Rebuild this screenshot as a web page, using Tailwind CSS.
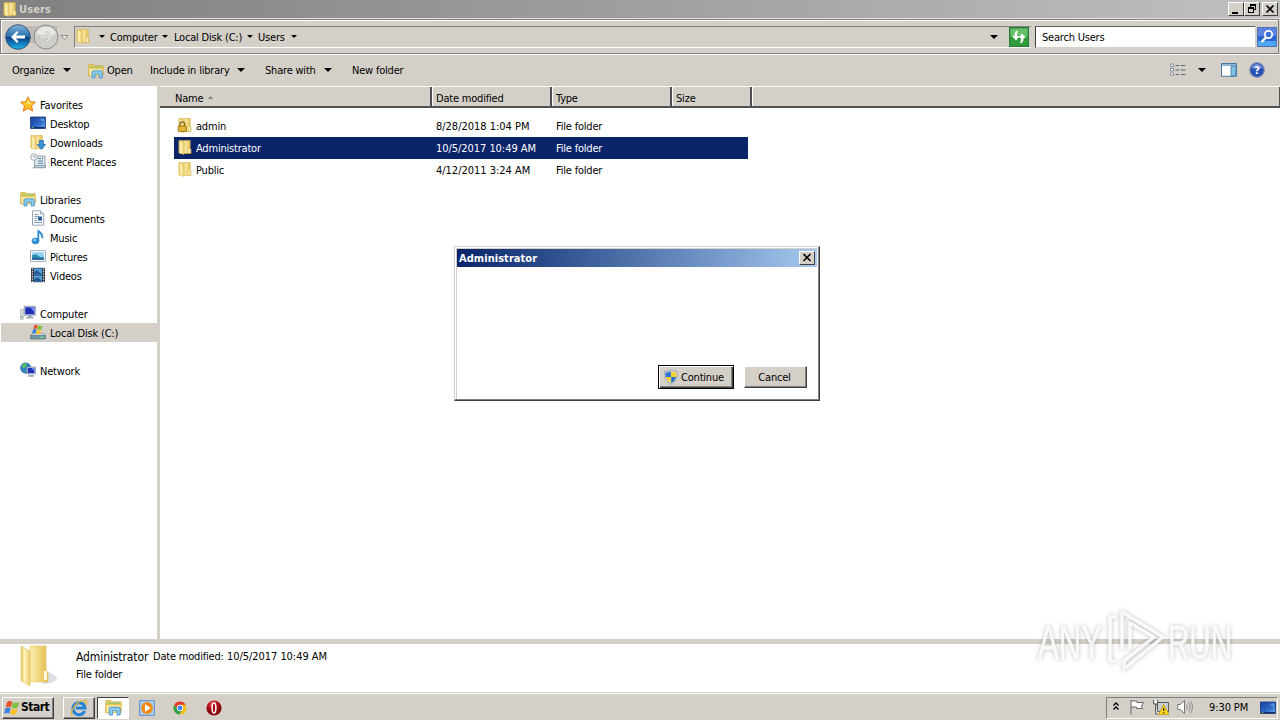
<!DOCTYPE html>
<html lang="en">
<head>
  <meta charset="UTF-8">
  <meta name="viewport" content="width=device-width, initial-scale=1.0">
  <title>Users</title>
  <script src="https://cdn.jsdelivr.net/npm/@tailwindcss/browser@4"></script>
  <style>
    body {
      font-family: 'DejaVu Sans Condensed', 'DejaVu Sans', sans-serif;
      font-stretch: condensed;
    }
  </style>
</head>
<body class="w-[1280px] h-[720px] overflow-hidden bg-[#d4d0c8] text-[11px] leading-[19px] tracking-[-0.2px] text-black whitespace-nowrap">

<!-- Icons -->
<svg class="absolute w-0 h-0">
  <defs>
    <linearGradient id="gFolder" x1="0" x2="1"><stop offset="0" stop-color="#fbeeb0"/><stop offset="1" stop-color="#e3bd4c"/></linearGradient>
    <linearGradient id="gFront" x1="0" x2="1"><stop offset="0" stop-color="#e6c55c"/><stop offset=".4" stop-color="#fdf3bd"/><stop offset="1" stop-color="#e9ca6a"/></linearGradient>
    <linearGradient id="gBlue" x1="0" y1="0" x2="0" y2="1"><stop offset="0" stop-color="#7fb4dc"/><stop offset=".48" stop-color="#2a6cae"/><stop offset=".52" stop-color="#0a3f85"/><stop offset="1" stop-color="#1fb6ee"/></linearGradient>
    <linearGradient id="gScreen" x1="0" y1="0" x2="1" y2="1"><stop offset="0" stop-color="#1a3c9c"/><stop offset=".6" stop-color="#2f6cc8"/><stop offset="1" stop-color="#6fb4ec"/></linearGradient>
    <linearGradient id="gStar" x1="0" y1="0" x2="0" y2="1"><stop offset="0" stop-color="#ffd83c"/><stop offset="1" stop-color="#ffb21c"/></linearGradient>
    <radialGradient id="gRed" cx=".4" cy=".25"><stop offset="0" stop-color="#ef6a6a"/><stop offset=".5" stop-color="#c41420"/><stop offset="1" stop-color="#8a0710"/></radialGradient>
  </defs>
  <symbol id="folder" viewBox="0 0 16 16">
    <path d="M2 1.500h4l1 .5v12H2z" fill="#f3dc84" stroke="#d8b54c" stroke-width=".6"/>
    <path d="M7 1.500h6.200v8l.8 1v4H7z" fill="url(#gFolder)" stroke="#d3ae44" stroke-width=".6"/>
    <path d="M2 2l5 1.600v11.900L2 14z" fill="url(#gFront)" stroke="#d8b54c" stroke-width=".4"/>
    <path d="M11.800 10h1.400v4h-1.400z" fill="#fff8d8"/>
  </symbol>
  <symbol id="lock" viewBox="0 0 16 16">
    <path d="M3 9V7.300a2.400 2.400 0 0 1 4.800 0V9" fill="none" stroke="#8c7426" stroke-width="1.500"/>
    <rect x="1.300" y="9" width="8" height="5.600" rx=".6" fill="#d9a520" stroke="#94700c" stroke-width=".8"/>
    <path d="M2 11h6.600M2 13h6.600" stroke="#f5d768" stroke-width=".7"/>
  </symbol>
  <symbol id="library" viewBox="0 0 16 16">
    <path d="M.7 13V2.200q0-.7.7-.7h4l1 1.300h8.800V12z" fill="#f0d265" stroke="#c9a136" stroke-width=".7"/>
    <path d="M2 4h12" stroke="#8fc46c" stroke-width="1.200"/>
    <path d="M.7 5.600h14.600l-.6 7.200H1.200z" fill="#fbeca4" stroke="#d8b54c" stroke-width=".6"/>
    <path d="M4 15V9.300q0-1.500 1.500-1.500h7.300q1.500 0 1.500 1.500V15h-3v-3.900H7V15z" fill="#8ccbf0" stroke="#3d8dc4" stroke-width=".8"/>
  </symbol>
  <symbol id="star" viewBox="0 0 16 16">
    <path d="M8 .8l2.200 4.900 5.200.5-3.900 3.600 1.200 5.300L8 12.400l-4.700 2.700 1.200-5.300L.6 6.200l5.200-.5z" fill="url(#gStar)" stroke="#e5811c" stroke-width="1"/>
    <path d="M8 3.500l1.400 3.300 3 .4-4.400.7z" fill="#fff3a8"/>
  </symbol>
  <symbol id="screen" viewBox="0 0 16 16">
    <path d="M.5 2h15v11.500H.5z" fill="url(#gScreen)" stroke="#16337c" stroke-width=".8"/>
    <path d="M1 12h14v1.400H1z" fill="#17316e"/>
    <path d="M1.800 12.200h1.600v1H1.800z" fill="#7fd36a"/>
    <path d="M10 4l4-.5v4z" fill="#8fc2f0" opacity=".5"/>
  </symbol>
  <symbol id="downloads" viewBox="0 0 16 16">
    <use href="#folder" x="-1" width="16" height="16"/>
    <path d="M9.400 6.500h4v4h2.200L11.400 15.400 7.200 10.500h2.200z" fill="#3a94dc" stroke="#1a62a8" stroke-width=".7"/>
  </symbol>
  <symbol id="recent" viewBox="0 0 16 16">
    <path d="M5 3h10v11.500H4.500v-8z" fill="#dfe7ec" stroke="#7d8e99" stroke-width=".8"/>
    <path d="M3 14.800h12.500v-2.300H5z" fill="#c3ced6" stroke="#7d8e99" stroke-width=".7"/>
    <path d="M8 5.500h3M8 8h5M8 10.300h5M12.500 4.500v2" stroke="#5b87a8" stroke-width="1"/>
    <circle cx="4" cy="4" r="3.300" fill="#f7f9fa" stroke="#8c9aa3" stroke-width=".8"/>
    <path d="M4 2v2h1.600" fill="none" stroke="#5a6d78" stroke-width=".7"/>
  </symbol>
  <symbol id="document" viewBox="0 0 16 16">
    <path d="M2.500.8h8l3.300 3.200v11.200H2.500z" fill="#fdfdfe" stroke="#7c90aa" stroke-width=".8"/>
    <path d="M10.500.8V4h3.300" fill="#d5e0ea" stroke="#7c90aa" stroke-width=".7"/>
    <path d="M4.500 4.500h4M4.500 6.500h4M4.500 8.500h2.500M4.500 10.500h2.500M4.500 12.500h7.500" stroke="#5c7fa8" stroke-width=".8"/>
    <path d="M8 6.500h4v4H8z" fill="#2d5f9c"/>
  </symbol>
  <symbol id="music" viewBox="0 0 16 16">
    <path d="M8.300 12V1.200c.5 2.500 5 3 3.900 8" fill="none" stroke="#2f8ed2" stroke-width="1.800"/>
    <ellipse cx="5.500" cy="12" rx="3.600" ry="2.900" fill="#2b93dc" stroke="#1b6caf" stroke-width=".5"/>
    <ellipse cx="4.700" cy="11" rx="1.500" ry=".9" fill="#a5d8f7"/>
  </symbol>
  <symbol id="picture" viewBox="0 0 16 16">
    <path d="M.6 2.600h14.800v11H.6z" fill="#fff" stroke="#7f93a3" stroke-width=".8"/>
    <path d="M2.200 4.200h11.600v7.800H2.200z" fill="#8fd0f2"/>
    <path d="M2.200 7q4-1.500 6 .8t5.600.8V12H2.200z" fill="#2b8fa0"/>
    <path d="M2.200 9.500q6-.3 11.600 1V12H2.200z" fill="#2a65a4"/>
  </symbol>
  <symbol id="video" viewBox="0 0 16 16">
    <path d="M1 .8h14v14.400H1z" fill="#333c46"/>
    <path d="M4 1.500h8v6H4zM4 8.500h8v6H4z" fill="#4fa3dc"/>
    <path d="M4 5l3-2 5 4.500H4zM4 12l4-2 4 4.500H4z" fill="#275c98"/>
    <path d="M2.500 1.500v14M13.500 1.500v14" stroke="#dfe6ea" stroke-width="1.200" stroke-dasharray="1.300 1.200"/>
  </symbol>
  <symbol id="computer" viewBox="0 0 16 16">
    <path d="M.6 4.500h2.600v9.800H.6z" fill="#e2e6e8" stroke="#8b979e" stroke-width=".6"/>
    <path d="M1 11h1.600v1.500H1z" fill="#62b84c"/>
    <path d="M4.200 1.300h11.200v9H4.200z" fill="#d8dee6" stroke="#7885a0" stroke-width=".7"/>
    <path d="M5.200 2.300h9.200v7H5.200z" fill="#1d2fb4"/>
    <path d="M10 2.300h4.400v5z" fill="#6f8ef0"/>
    <path d="M8 10.300h3.600v1.700H8zM6 12h7.600v1.500H6z" fill="#9aa6b4"/>
  </symbol>
  <symbol id="winflag" viewBox="0 0 16 16">
    <path d="M3.100 2q2.700-1.700 5.200-.2L6.900 7.300q-2.500-1.400-5.200.2z" fill="#e8522a"/>
    <path d="M9 2.200q2.700 1.400 6.200-.2l-1.400 5.600q-3.300 1.500-6.200 0z" fill="#7cc03c"/>
    <path d="M1.500 8.300q2.600-1.600 5.200-.2l-1.400 5.500q-2.500-1.400-5.300.2z" fill="#3d82dc"/>
    <path d="M7.400 8.500q2.900 1.500 6.200.1L12.200 14q-3.300 1.500-6.200-.1z" fill="#fbc02c"/>
  </symbol>
  <symbol id="disk" viewBox="0 0 16 16">
    <path d="M2 9.500h12l1.500 2.500H.5z" fill="#cfd8dc" stroke="#71828a" stroke-width=".5"/>
    <path d="M.5 11.500h15v3.500H.5z" fill="#6f97a6" stroke="#4c6b78" stroke-width=".6"/>
    <path d="M10 13.200h4" stroke="#8be58a" stroke-width="1"/>
    <use href="#winflag" x="2" y="0" width="11" height="11"/>
  </symbol>
  <symbol id="network" viewBox="0 0 16 16">
    <circle cx="5.700" cy="6" r="5.200" fill="#2d83c6" stroke="#1c5c94" stroke-width=".5"/>
    <path d="M2 3q3-2.500 5-1.500L6 5 3 6.500zM5 8l4-1-1 4z" fill="#5cc05c"/>
    <path d="M6.800 5h8.600v7H6.800z" fill="#d8dee6" stroke="#66759a" stroke-width=".6"/>
    <path d="M7.700 5.900h6.800v5.200H7.700z" fill="#1d2fb4"/>
    <path d="M11.500 5.900h3v3.500z" fill="#6f8ef0"/>
    <path d="M8.500 13.200h5.300v1.500H8.500z" fill="#8793a4"/>
  </symbol>
  <symbol id="down" viewBox="0 0 8 4"><path d="M0 0h8L4 4z"/></symbol>
  <symbol id="shield" viewBox="0 0 16 16">
    <path d="M8 .7q3 2 6.300 1.900Q15 11.300 8 15.400 1 11.300 1.700 2.600 5 2.700 8 .7z" fill="#e8edf2" stroke="#8090a0" stroke-width=".8"/>
    <path d="M7.900 2v6H2.800q-.5-2-.3-4.300Q5.600 3.600 7.900 2z" fill="#2a70cc"/>
    <path d="M8.100 2v6h5.100q.5-2 .3-4.300Q10.400 3.600 8.100 2z" fill="#f6d02c"/>
    <path d="M7.900 8v6.200Q4 12 2.800 8z" fill="#f6d02c"/>
    <path d="M8.100 8v6.200Q12 12 13.200 8z" fill="#2a70cc"/>
  </symbol>
</svg>

<div class="relative flex flex-col h-full">

  <!-- Title bar -->
  <header class="flex items-center h-[18px] pl-[2px] pr-[2px] bg-linear-to-r from-[#808080] to-[#c0c0c0]">
    <svg class="w-4 h-4"><use href="#folder"/></svg>
    <span class="ml-[1px] font-bold tracking-[0.1px] text-[#d4d0c8]">Users</span>
    <div class="flex ml-auto">
      <div class="w-4 h-[14px] bg-[#d4d0c8] border border-t-white border-l-white border-r-[#404040] border-b-[#404040]"><svg class="w-[14px] h-3" shape-rendering="crispEdges"><path d="M3 9h6v2H3z"/></svg></div>
      <div class="w-4 h-[14px] bg-[#d4d0c8] border border-t-white border-l-white border-r-[#404040] border-b-[#404040]"><svg class="w-[14px] h-3" shape-rendering="crispEdges"><path d="M5 1h6v6H9V6h1V3H6v1H5zM3 4h6v6H3zM4 6v3h4V6z" fill-rule="evenodd"/></svg></div>
      <div class="w-4 h-[14px] ml-[2px] bg-[#d4d0c8] border border-t-white border-l-white border-r-[#404040] border-b-[#404040]"><svg class="w-[14px] h-3"><path d="M3.500 2.500l7 7M10.500 2.500l-7 7" stroke="#000" stroke-width="1.600"/></svg></div>
    </div>
  </header>

  <!-- Address bar -->
  <div class="h-[37px] pr-px border-t border-b border-t-[#e4e1dc] border-b-white">
    <div class="flex items-center w-full h-[35px] pl-1 border border-[#808080] shadow-[inset_1px_1px_0_#fff]">
      <svg class="w-[68px] h-[30px] shrink-0" viewBox="0 0 68 30">
        <rect x="10" y="4" width="42" height="17" fill="#bdbbb7"/>
        <circle cx="13" cy="15" r="12.300" fill="url(#gBlue)" stroke="#355578" stroke-width="1"/>
        <path d="M6 15l6-6 1.500 1.600-2.600 2.800H20v3.200h-9.100l2.600 2.800L12 21z" fill="#fff"/>
        <circle cx="41" cy="15" r="12" fill="#cfcdca" stroke="#8c8c8c" stroke-width="1"/>
        <path d="M31 12a10.500 10.500 0 0 1 20 0q-10 4-20 0z" fill="#e8e7e5"/>
        <path d="M48 15l-6-6-1.500 1.600 2.600 2.800H34v3.200h9.100l-2.600 2.800L42 21z" fill="#dddbd8" stroke="#bbb" stroke-width=".6"/>
        <path d="M56 13.500h7l-3.500 4z" fill="#eee" stroke="#8a8a8a"/>
      </svg>
      <div class="flex items-center w-[957px] h-[22px] shrink-0 ml-px border-t border-l border-t-[#808080] border-l-[#808080] border-b border-b-white">
        <svg class="w-4 h-4 -mt-px"><use href="#folder"/></svg>
        <svg class="w-[6px] h-[3px] ml-[8px]"><use href="#down"/></svg>
        <span class="ml-[5px] w-[50px] pt-px">Computer</span>
        <svg class="w-[6px] h-[3px] ml-[2px]"><use href="#down"/></svg>
        <span class="ml-[6px] w-[69px] pt-px">Local Disk (C:)</span>
        <svg class="w-[6px] h-[3px] ml-[4px]"><use href="#down"/></svg>
        <span class="ml-[5px] w-[29px] pt-px">Users</span>
        <svg class="w-[6px] h-[3px] ml-[4px]"><use href="#down"/></svg>
        <svg class="w-2 h-1 ml-auto mr-[11px]"><use href="#down"/></svg>
        <svg class="w-5 h-5 mr-[2px]" viewBox="0 0 20 20">
          <rect x=".5" y=".5" width="19" height="19" fill="#2f9c3c" stroke="#2c7a38"/>
          <rect x="1.500" y="1.500" width="17" height="8" fill="#67bf6c"/>
          <path d="M9 3.500Q5 4 5.500 9H3l4 4.500L10.500 9H8q0-3 1-5.500zM11 16.500q4-.5 3.500-5.500H17l-4-4.500L9.500 11H12q0 3-1 5.500z" fill="#fff"/>
        </svg>
      </div>
      <div class="flex items-center w-[221px] h-[22px] shrink-0 ml-[4px] pl-[6px] pt-px bg-white border border-t-[#606060] border-l-[#404040] border-r-[#d4d0c8] border-b-[#d4d0c8]">Search Users</div>
      <svg class="w-5 h-5 ml-px shrink-0" viewBox="0 0 20 20">
        <rect x=".5" y=".5" width="19" height="19" fill="#2a63d2" stroke="#5272b8"/>
        <rect x="1" y="1" width="18" height="8" fill="#5c82e2"/>
        <rect x="1" y="14" width="18" height="5" fill="#4ea6f0"/>
        <circle cx="11.500" cy="7.500" r="3.700" fill="#3c6fd8" stroke="#fff" stroke-width="1.800"/>
        <path d="M9 10.500L4.500 15" stroke="#fff" stroke-width="2.400"/>
      </svg>
    </div>
  </div>

  <!-- Command bar -->
  <div class="flex items-center h-[31px] pl-3 pr-[15px]">
    <span class="w-[44px]">Organize</span>
    <svg class="w-2 h-1 ml-[7px] -mt-px"><use href="#down"/></svg>
    <svg class="w-4 h-4 ml-[17px]"><use href="#library"/></svg>
    <span class="ml-[3px] w-[27px]">Open</span>
    <span class="ml-[16px] w-[80px]">Include in library</span>
    <svg class="w-2 h-1 ml-[7px] -mt-px"><use href="#down"/></svg>
    <span class="ml-[20px] w-[52px]">Share with</span>
    <svg class="w-2 h-1 ml-[7px] -mt-px"><use href="#down"/></svg>
    <span class="ml-[20px]">New folder</span>
    <svg class="w-4 h-4 ml-auto -mt-[2px]" viewBox="0 0 16 16"><path d="M.5 2h3v2.500h-3zM.5 6.500h3V9h-3zM.5 11h3v2.500h-3z" fill="#fff" stroke="#7d8894" stroke-width=".9"/><path d="M5.500 3.500h4M11 3.500h4.500M5.500 8h4M11 8h4.500M5.500 12.500h4M11 12.500h4.500" stroke="#5c6874"/></svg>
    <svg class="w-2 h-1 ml-[12px] -mt-[2px]"><use href="#down"/></svg>
    <svg class="w-4 h-4 ml-[15px] -mt-[2px]" viewBox="0 0 16 16"><path d="M.5 1.500h15v12.800H.5z" fill="#fff" stroke="#47789c"/><path d="M1 2h14v2H1z" fill="#8fb9d8"/><path d="M10 4h5v10h-5z" fill="#7cc0e4" stroke="#47789c" stroke-width=".8"/></svg>
    <svg class="w-4 h-4 ml-[12px] -mt-[2px]" viewBox="0 0 16 16"><circle cx="8" cy="8" r="7.300" fill="#2a50b4" stroke="#8593b4" stroke-width="1.200"/><path d="M2.500 6a5.800 5.800 0 0 1 11 0q-5 2-11 0z" fill="#6f8edc"/><text x="8" y="12.200" text-anchor="middle" font-size="11" font-weight="bold" fill="#fff">?</text></svg>
  </div>

  <!-- Main area -->
  <main class="flex h-[553px] bg-white">

    <nav class="w-[157px] pt-[9px]">
      <div class="flex items-center h-[19px] pl-5 pt-[2px]"><svg class="w-4 h-4 mr-1 mb-[4px]"><use href="#star"/></svg>Favorites</div>
      <div class="flex items-center h-[19px] pl-[30px] pt-[2px]"><svg class="w-4 h-4 mr-1 mb-[3px]"><use href="#screen"/></svg>Desktop</div>
      <div class="flex items-center h-[19px] pl-[30px] pt-[2px]"><svg class="w-4 h-4 mr-1 mb-[3px]"><use href="#downloads"/></svg>Downloads</div>
      <div class="flex items-center h-[19px] pl-[30px] pt-[2px]"><svg class="w-4 h-4 mr-1 mb-[3px]"><use href="#recent"/></svg>Recent Places</div>

      <div class="flex items-center h-[19px] pl-5 pt-[2px] mt-[19px]"><svg class="w-4 h-4 mr-1 mb-[3px]"><use href="#library"/></svg>Libraries</div>
      <div class="flex items-center h-[19px] pl-[30px] pt-[2px]"><svg class="w-4 h-4 mr-1 mb-[3px]"><use href="#document"/></svg>Documents</div>
      <div class="flex items-center h-[19px] pl-[30px] pt-[2px]"><svg class="w-4 h-4 mr-1 mb-[3px]"><use href="#music"/></svg>Music</div>
      <div class="flex items-center h-[19px] pl-[30px] pt-[2px]"><svg class="w-4 h-4 mr-1 mb-[3px]"><use href="#picture"/></svg>Pictures</div>
      <div class="flex items-center h-[19px] pl-[30px] pt-[2px]"><svg class="w-4 h-4 mr-1 mb-[3px]"><use href="#video"/></svg>Videos</div>

      <div class="flex items-center h-[19px] pl-5 pt-[2px] mt-[19px]"><svg class="w-4 h-4 mr-1 mb-[3px]"><use href="#computer"/></svg>Computer</div>
      <div class="flex items-center h-[19px] pl-[29px] pt-[2px] ml-px bg-[#d4d0c8]"><svg class="w-4 h-4 mr-1 mb-[3px]"><use href="#disk"/></svg>Local Disk (C:)</div>

      <div class="flex items-center h-[19px] pl-5 pt-[2px] mt-[19px]"><svg class="w-4 h-4 mr-1 mb-[3px]"><use href="#network"/></svg>Network</div>
    </nav>
    <div class="w-[3px] bg-[#d4d0c8]"></div>

    <section class="flex-1">
      <!-- Column headers -->
      <div class="flex h-[22px] bg-[#d4d0c8] border-t border-t-white border-b-2 border-b-[#505050] leading-[23px]">
        <div class="flex w-[272px] pl-[15px] border-r-2 border-r-[#505050]">Name<svg class="w-[5px] h-[3px] ml-[5px] mt-[9px]" viewBox="0 0 5 3"><path d="M0 3h5L2.500 0z" fill="#808080"/></svg></div>
        <div class="w-[120px] h-[19px] pl-[3px] border-l border-l-white border-r-2 border-r-[#505050]">Date modified</div>
        <div class="w-[120px] h-[19px] pl-[3px] border-l border-l-white border-r-2 border-r-[#505050]">Type</div>
        <div class="w-[80px] h-[19px] pl-[3px] border-l border-l-white border-r-2 border-r-[#505050]">Size</div>
        <div class="flex-1 border-l border-l-white border-r border-r-[#505050]"></div>
      </div>

      <!-- Files -->
      <div class="w-[574px] ml-[14px] mt-[7px] leading-[20px]">
        <div class="flex items-center h-[22px] pl-[3px] pt-[2px]">
          <svg class="w-4 h-4 mb-[4px]"><use href="#folder"/><use href="#lock"/></svg>
          <span class="w-[240px] ml-[3px]">admin</span>
          <span class="w-[120px] tracking-[-0.02px]">8/28/2018 1:04 PM</span>
          <span>File folder</span>
        </div>
        <div class="flex items-center h-[22px] pl-[3px] pt-[2px] bg-[#0a246a] text-white">
          <svg class="w-4 h-4 mb-[4px]"><use href="#folder"/></svg>
          <span class="w-[240px] ml-[3px]">Administrator</span>
          <span class="w-[120px] tracking-[-0.05px]">10/5/2017 10:49 AM</span>
          <span>File folder</span>
        </div>
        <div class="flex items-center h-[22px] pl-[3px] pt-[2px]">
          <svg class="w-4 h-4 mb-[4px]"><use href="#folder"/></svg>
          <span class="w-[240px] ml-[3px]">Public</span>
          <span class="w-[120px] tracking-[-0.02px]">4/12/2011 3:24 AM</span>
          <span>File folder</span>
        </div>
      </div>
    </section>
  </main>

  <!-- Details pane -->
  <div class="flex h-[53px] bg-white border-t-5 border-t-[#d4d0c8]">
    <svg class="w-[40px] h-[44px] ml-[18px]" viewBox="0 0 40 44">
      <path d="M24 40q14 0 15-7l-9-6z" fill="#9aa4ac" opacity=".35"/>
      <path d="M12 2h16v24l2 2v10H12z" fill="url(#gFolder)" stroke="#e0c264" stroke-width=".6"/>
      <path d="M3 2l9 5v35l-9-5z" fill="url(#gFront)" stroke="#e0c264" stroke-width=".6"/>
      <path d="M26 27h3v9h-3z" fill="#fffbe8"/>
    </svg>
    <div class="ml-[18px] pt-[4px] leading-[18px]">
      <div class="flex"><span class="w-[77px] text-[12px] tracking-[-0.1px]">Administrator</span><span class="w-[74px]">Date modified:</span><span class="tracking-[-0.05px]">10/5/2017 10:49 AM</span></div>
      <div>File folder</div>
    </div>
  </div>

  <!-- Taskbar -->
  <footer class="flex items-center h-[28px] pl-[2px] pr-[2px] border-t border-t-[#d4d0c8] shadow-[inset_0_1px_0_#fff]">
    <div class="flex items-center w-[52px] h-[22px] mt-[2px] border border-t-white border-l-white border-r-[#404040] border-b-[#404040] shadow-[inset_-1px_-1px_0_#808080] font-bold text-[12px] tracking-[-0.5px]"><svg class="w-4 h-4 ml-[1px] mr-px"><use href="#winflag"/></svg>Start</div>
    <div class="flex items-center justify-center w-8 h-[22px] mt-[2px] ml-[9px] border border-t-white border-l-white border-r-[#404040] border-b-[#404040] shadow-[inset_-1px_-1px_0_#808080]">
      <svg class="w-[18px] h-[18px]" viewBox="0 0 18 18"><path d="M14.600 12A6 6 0 1 1 15 9H6" fill="none" stroke="#2183d8" stroke-width="3"/><path d="M2.500 16Q-.5 15 4 8T16 1.800q1.500 1-.5 4" fill="none" stroke="#e6b52c" stroke-width="1.300"/></svg>
    </div>
    <div class="flex items-center justify-center w-8 h-[22px] mt-[2px] ml-[2px] bg-[#fdfdfc] border border-t-[#404040] border-l-[#404040] border-r-white border-b-white"><svg class="w-[17px] h-[17px]"><use href="#library"/></svg></div>
    <svg class="w-4 h-4 mt-[2px] ml-[10px]" viewBox="0 0 16 16"><path d="M.6.6h14.800v14.800H.6z" fill="#a9cdf0" stroke="#5d8fc4" stroke-width="1"/><circle cx="8" cy="8" r="5.900" fill="#f48a14"/><path d="M6 4.300L11.700 8 6 11.700z" fill="#fff"/></svg>
    <svg class="w-[14px] h-[14px] mt-[2px] ml-[18px]" viewBox="0 0 16 16"><circle cx="8" cy="8" r="7.500" fill="#fbc116"/><path d="M1.500 4.200A7.500 7.500 0 0 1 14.500 4.300H8L5 10z" fill="#e33b2e"/><path d="M1.500 4.200A7.500 7.500 0 0 0 7.300 15.500L11 9.700 5 10z" fill="#2ba24c"/><circle cx="8" cy="8" r="3.600" fill="#fff"/><circle cx="8" cy="8" r="2.800" fill="#4285f4"/></svg>
    <svg class="w-4 h-4 mt-[2px] ml-[19px]" viewBox="0 0 16 16"><circle cx="8" cy="8" r="7.600" fill="url(#gRed)"/><ellipse cx="8" cy="8" rx="1.900" ry="5" fill="#a00c14" stroke="#fff" stroke-width="1.500"/></svg>

    <div class="flex items-center w-[172px] h-[22px] mt-[2px] ml-auto border border-t-[#808080] border-l-[#808080] border-r-white border-b-white">
      <svg class="w-[6px] h-[8px] ml-[6px] -mt-[3px]" viewBox="0 0 6 8"><path d="M.5 3.500L3 1l2.500 2.500M.5 7.500L3 5l2.500 2.500" fill="none" stroke="#000" stroke-width="1.300"/></svg>
      <svg class="w-4 h-4 ml-[10px] -mt-px" viewBox="0 0 16 16"><path d="M2 1v14.500M2 2h6v1.500h6.500L12.500 7l1 2.500H7.500V8H2" fill="#fff" stroke="#686868"/></svg>
      <svg class="w-4 h-4 ml-[8px] -mt-px" viewBox="0 0 16 16"><path d="M4.500 3.500h11v9h-11z" fill="#c9d0d4" stroke="#545c60"/><path d="M.7 1v4h4V1M2.700 5v10h2" fill="#fff" stroke="#484848"/><path d="M10.700 5.500L16 15.400H5.500z" fill="#ffd91c" stroke="#b08a00" stroke-width=".7"/><path d="M10.700 9v3M10.700 13v1.200" stroke="#222" stroke-width="1.200"/></svg>
      <svg class="w-4 h-4 ml-[8px] -mt-px" viewBox="0 0 16 16"><path d="M.7 5.500h2.500L7.500 1.500v13L3.200 10.500H.7z" fill="#fff" stroke="#6a6a6a" stroke-width=".9"/><path d="M9.500 5.500q2 2.500 0 5M11.500 3.500q3.500 4.500 0 9M13.500 2q4 6 0 12" fill="none" stroke="#888" stroke-width=".9"/></svg>
      <span class="ml-4 tracking-[-0.1px]">9:30 PM</span>
      <svg class="w-4 h-4 ml-auto mr-px"><use href="#screen"/></svg>
    </div>
  </footer>

  <!-- Dialog -->
  <div class="absolute left-[454px] top-[246px] w-[366px] h-[155px] flex flex-col p-px bg-white border border-t-[#d4d0c8] border-l-[#d4d0c8] border-r-[#404040] border-b-[#404040] shadow-[inset_-1px_-1px_0_#808080,inset_1px_1px_0_#fff,inset_2px_2px_0_#d4d0c8]">
    <div class="flex items-center h-[18px] m-px pl-[2px] pr-[2px] bg-linear-to-r from-[#0a246a] to-[#a6caf0] text-white font-bold tracking-[0.05px]">
      Administrator
      <div class="w-4 h-[14px] ml-auto bg-[#d4d0c8] border border-t-white border-l-white border-r-[#404040] border-b-[#404040]"><svg class="w-[14px] h-3"><path d="M3.500 2l7 7M10.500 2l-7 7" stroke="#000" stroke-width="1.600"/></svg></div>
    </div>
    <div class="flex justify-end mt-auto mb-[10px] mr-[11px] gap-[10px] items-center">
      <button class="flex items-center w-[76px] h-6 pl-[4px] bg-[#d4d0c8] border border-black shadow-[inset_1px_1px_0_#fff,inset_-1px_-1px_0_#404040,inset_-2px_-2px_0_#808080]"><svg class="w-4 h-4 mr-[2px]"><use href="#shield"/></svg>Continue</button>
      <button class="w-[63px] h-[22px] pr-[2px] bg-[#d4d0c8] border border-t-white border-l-white border-r-[#404040] border-b-[#404040] shadow-[inset_-1px_-1px_0_#808080]">Cancel</button>
    </div>
  </div>

  <!-- Watermark -->
  <svg class="absolute left-[1030px] top-[600px] w-[240px] h-[80px] drop-shadow-[0_0_2px_rgba(0,0,0,0.3)]" viewBox="0 0 240 80">
    <g fill="#fff" fill-opacity=".85" stroke="#fff" stroke-opacity=".6" stroke-width=".8" font-family="Liberation Sans" font-size="48" letter-spacing="0">
      <text x="8" y="59" textLength="64" lengthAdjust="spacingAndGlyphs">ANY</text>
      <text x="138" y="59" textLength="64" lengthAdjust="spacingAndGlyphs">RUN</text>
    </g>
    <g fill="none" stroke="#fff" stroke-opacity=".85" stroke-width="3.500" stroke-linejoin="round">
      <path d="M86 17h-6v44h6"/>
      <path d="M92 50V12L133 37 94 69v-8l30-24-24-14v26"/>
    </g>
  </svg>
</div>

</body>
</html>
